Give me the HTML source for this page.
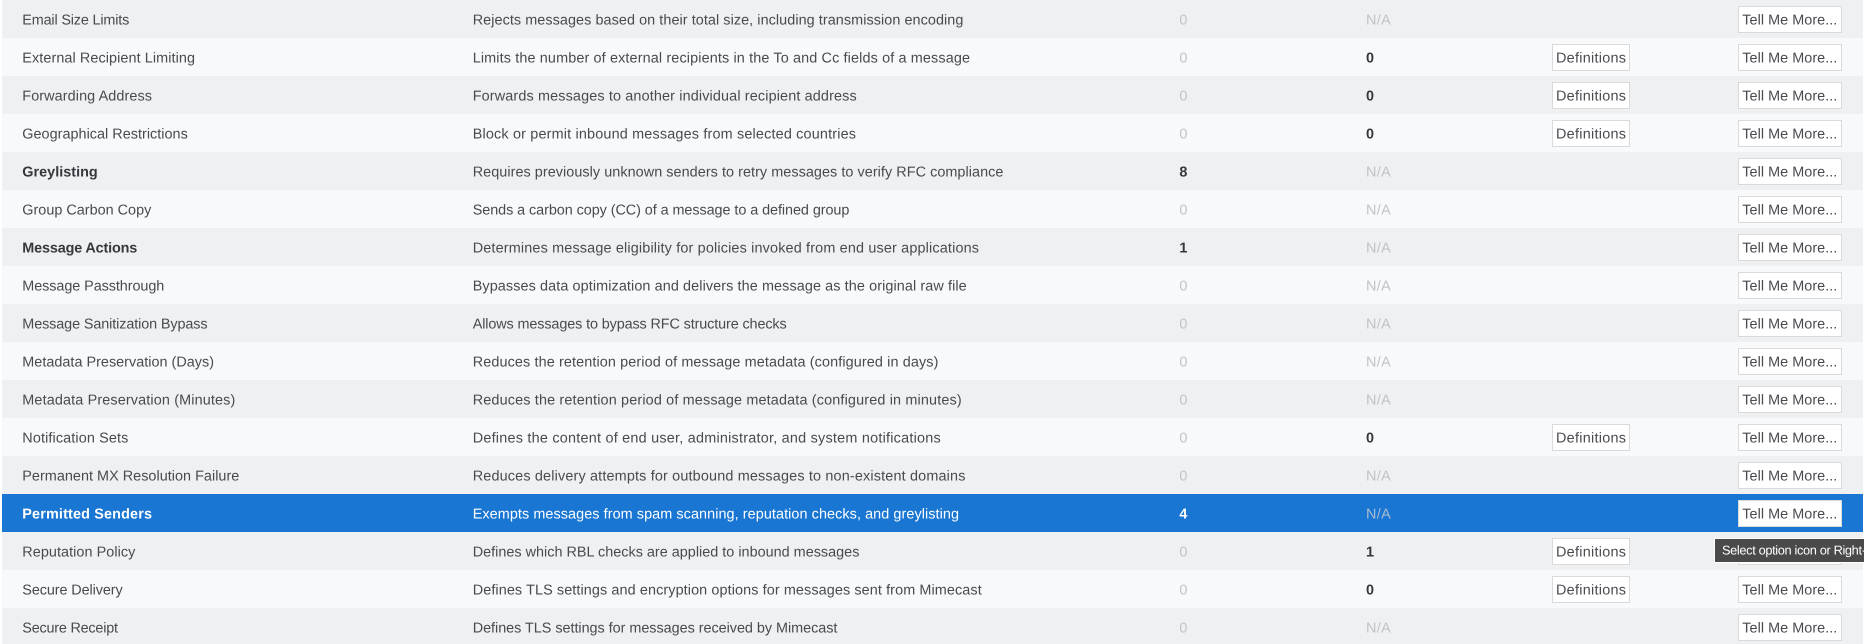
<!DOCTYPE html>
<html lang="en">
<head>
<meta charset="utf-8">
<title>Policies</title>
<style>
html,body{margin:0;padding:0;width:1864px;height:644px;overflow:hidden;background:#fff}
svg{display:block}
text{font-family:"Liberation Sans",Arial,sans-serif;font-size:14.4px;fill:#484a50;text-rendering:geometricPrecision;transform:translateY(-.3px)}
.b{font-weight:700;fill:#35373c}
.m{fill:#c2c3c6}
.g{fill:#eff0f2}
.l{fill:#f8f9fb}
.btn{fill:#fff;stroke:#d9dadc;stroke-width:1}
.w{fill:#fff}
.wb{fill:#fff;font-weight:700}
.n{fill:#a9bbd0}
.t{fill:#fff;font-size:12.8px}
</style>
</head>
<body>
<svg xmlns="http://www.w3.org/2000/svg" width="1864" height="644" viewBox="0 0 1864 644">
<defs>
<g id="tm"><rect class="btn" x="1738.5" y="6.5" width="103" height="26"/><text x="1742.3" y="25" textLength="95" lengthAdjust="spacing">Tell Me More...</text></g>
<g id="df"><rect class="btn" x="1552.5" y="6.5" width="77" height="26"/><text x="1556" y="25" textLength="70" lengthAdjust="spacing">Definitions</text></g>
</defs>

<g transform="translate(0,0)"><rect class="g" x="2" width="1861" height="38"/>
<text x="22.3" y="25" textLength="107" lengthAdjust="spacing">Email Size Limits</text>
<text x="472.7" y="25" textLength="490.7" lengthAdjust="spacing">Rejects messages based on their total size, including transmission encoding</text>
<text class="m" x="1179.4" y="25" textLength="8.5" lengthAdjust="spacing">0</text>
<text class="m" x="1366" y="25" textLength="24.7" lengthAdjust="spacing">N/A</text>
<use href="#tm"/></g>

<g transform="translate(0,38)"><rect class="l" x="2" width="1861" height="38"/>
<text x="22.3" y="25" textLength="172.7" lengthAdjust="spacing">External Recipient Limiting</text>
<text x="472.7" y="25" textLength="497.3" lengthAdjust="spacing">Limits the number of external recipients in the To and Cc fields of a message</text>
<text class="m" x="1179.4" y="25" textLength="8.5" lengthAdjust="spacing">0</text>
<text class="b" x="1366" y="25" textLength="8" lengthAdjust="spacing">0</text>
<use href="#df"/><use href="#tm"/></g>

<g transform="translate(0,76)"><rect class="g" x="2" width="1861" height="38"/>
<text x="22.3" y="25" textLength="129.7" lengthAdjust="spacing">Forwarding Address</text>
<text x="472.7" y="25" textLength="384" lengthAdjust="spacing">Forwards messages to another individual recipient address</text>
<text class="m" x="1179.4" y="25" textLength="8.5" lengthAdjust="spacing">0</text>
<text class="b" x="1366" y="25" textLength="8" lengthAdjust="spacing">0</text>
<use href="#df"/><use href="#tm"/></g>

<g transform="translate(0,114)"><rect class="l" x="2" width="1861" height="38"/>
<text x="22.3" y="25" textLength="165.5" lengthAdjust="spacing">Geographical Restrictions</text>
<text x="472.7" y="25" textLength="383.3" lengthAdjust="spacing">Block or permit inbound messages from selected countries</text>
<text class="m" x="1179.4" y="25" textLength="8.5" lengthAdjust="spacing">0</text>
<text class="b" x="1366" y="25" textLength="8" lengthAdjust="spacing">0</text>
<use href="#df"/><use href="#tm"/></g>

<g transform="translate(0,152)"><rect class="g" x="2" width="1861" height="38"/>
<text class="b" x="22.3" y="25" textLength="75.4" lengthAdjust="spacing">Greylisting</text>
<text x="472.7" y="25" textLength="530.7" lengthAdjust="spacing">Requires previously unknown senders to retry messages to verify RFC compliance</text>
<text class="b" x="1179.4" y="25" textLength="8.5" lengthAdjust="spacing">8</text>
<text class="m" x="1366" y="25" textLength="24.7" lengthAdjust="spacing">N/A</text>
<use href="#tm"/></g>

<g transform="translate(0,190)"><rect class="l" x="2" width="1861" height="38"/>
<text x="22.3" y="25" textLength="129" lengthAdjust="spacing">Group Carbon Copy</text>
<text x="472.7" y="25" textLength="376.7" lengthAdjust="spacing">Sends a carbon copy (CC) of a message to a defined group</text>
<text class="m" x="1179.4" y="25" textLength="8.5" lengthAdjust="spacing">0</text>
<text class="m" x="1366" y="25" textLength="24.7" lengthAdjust="spacing">N/A</text>
<use href="#tm"/></g>

<g transform="translate(0,228)"><rect class="g" x="2" width="1861" height="38"/>
<text class="b" x="22.3" y="25" textLength="115" lengthAdjust="spacing">Message Actions</text>
<text x="472.7" y="25" textLength="506.3" lengthAdjust="spacing">Determines message eligibility for policies invoked from end user applications</text>
<text class="b" x="1179.4" y="25" textLength="8" lengthAdjust="spacing">1</text>
<text class="m" x="1366" y="25" textLength="24.7" lengthAdjust="spacing">N/A</text>
<use href="#tm"/></g>

<g transform="translate(0,266)"><rect class="l" x="2" width="1861" height="38"/>
<text x="22.3" y="25" textLength="142" lengthAdjust="spacing">Message Passthrough</text>
<text x="472.7" y="25" textLength="494" lengthAdjust="spacing">Bypasses data optimization and delivers the message as the original raw file</text>
<text class="m" x="1179.4" y="25" textLength="8.5" lengthAdjust="spacing">0</text>
<text class="m" x="1366" y="25" textLength="24.7" lengthAdjust="spacing">N/A</text>
<use href="#tm"/></g>

<g transform="translate(0,304)"><rect class="g" x="2" width="1861" height="38"/>
<text x="22.3" y="25" textLength="185.3" lengthAdjust="spacing">Message Sanitization Bypass</text>
<text x="472.7" y="25" textLength="314" lengthAdjust="spacing">Allows messages to bypass RFC structure checks</text>
<text class="m" x="1179.4" y="25" textLength="8.5" lengthAdjust="spacing">0</text>
<text class="m" x="1366" y="25" textLength="24.7" lengthAdjust="spacing">N/A</text>
<use href="#tm"/></g>

<g transform="translate(0,342)"><rect class="l" x="2" width="1861" height="38"/>
<text x="22.3" y="25" textLength="191.7" lengthAdjust="spacing">Metadata Preservation (Days)</text>
<text x="472.7" y="25" textLength="465.7" lengthAdjust="spacing">Reduces the retention period of message metadata (configured in days)</text>
<text class="m" x="1179.4" y="25" textLength="8.5" lengthAdjust="spacing">0</text>
<text class="m" x="1366" y="25" textLength="24.7" lengthAdjust="spacing">N/A</text>
<use href="#tm"/></g>

<g transform="translate(0,380)"><rect class="g" x="2" width="1861" height="38"/>
<text x="22.3" y="25" textLength="213" lengthAdjust="spacing">Metadata Preservation (Minutes)</text>
<text x="472.7" y="25" textLength="489" lengthAdjust="spacing">Reduces the retention period of message metadata (configured in minutes)</text>
<text class="m" x="1179.4" y="25" textLength="8.5" lengthAdjust="spacing">0</text>
<text class="m" x="1366" y="25" textLength="24.7" lengthAdjust="spacing">N/A</text>
<use href="#tm"/></g>

<g transform="translate(0,418)"><rect class="l" x="2" width="1861" height="38"/>
<text x="22.3" y="25" textLength="106" lengthAdjust="spacing">Notification Sets</text>
<text x="472.7" y="25" textLength="468" lengthAdjust="spacing">Defines the content of end user, administrator, and system notifications</text>
<text class="m" x="1179.4" y="25" textLength="8.5" lengthAdjust="spacing">0</text>
<text class="b" x="1366" y="25" textLength="8" lengthAdjust="spacing">0</text>
<use href="#df"/><use href="#tm"/></g>

<g transform="translate(0,456)"><rect class="g" x="2" width="1861" height="38"/>
<text x="22.3" y="25" textLength="217" lengthAdjust="spacing">Permanent MX Resolution Failure</text>
<text x="472.7" y="25" textLength="492.7" lengthAdjust="spacing">Reduces delivery attempts for outbound messages to non-existent domains</text>
<text class="m" x="1179.4" y="25" textLength="8.5" lengthAdjust="spacing">0</text>
<text class="m" x="1366" y="25" textLength="24.7" lengthAdjust="spacing">N/A</text>
<use href="#tm"/></g>

<g transform="translate(0,494)"><rect fill="#1976d2" x="2" width="1861" height="38"/>
<text class="wb" x="22.3" y="25" textLength="129.7" lengthAdjust="spacing">Permitted Senders</text>
<text class="w" x="472.7" y="25" textLength="486.3" lengthAdjust="spacing">Exempts messages from spam scanning, reputation checks, and greylisting</text>
<text class="wb" x="1179.4" y="25" textLength="8.5" lengthAdjust="spacing">4</text>
<text class="n" x="1366" y="25" textLength="24.7" lengthAdjust="spacing">N/A</text>
<use href="#tm"/></g>

<g transform="translate(0,532)"><rect class="g" x="2" width="1861" height="38"/>
<text x="22.3" y="25" textLength="113" lengthAdjust="spacing">Reputation Policy</text>
<text x="472.7" y="25" textLength="386.7" lengthAdjust="spacing">Defines which RBL checks are applied to inbound messages</text>
<text class="m" x="1179.4" y="25" textLength="8.5" lengthAdjust="spacing">0</text>
<text class="b" x="1366" y="25" textLength="6" lengthAdjust="spacing">1</text>
<use href="#df"/><use href="#tm"/></g>

<g transform="translate(0,570)"><rect class="l" x="2" width="1861" height="38"/>
<text x="22.3" y="25" textLength="100.4" lengthAdjust="spacing">Secure Delivery</text>
<text x="472.7" y="25" textLength="509" lengthAdjust="spacing">Defines TLS settings and encryption options for messages sent from Mimecast</text>
<text class="m" x="1179.4" y="25" textLength="8.5" lengthAdjust="spacing">0</text>
<text class="b" x="1366" y="25" textLength="8" lengthAdjust="spacing">0</text>
<use href="#df"/><use href="#tm"/></g>

<g transform="translate(0,608)"><rect class="g" x="2" width="1861" height="36"/>
<text x="22.3" y="25" textLength="95.7" lengthAdjust="spacing">Secure Receipt</text>
<text x="472.7" y="25" textLength="364.7" lengthAdjust="spacing">Defines TLS settings for messages received by Mimecast</text>
<text class="m" x="1179.4" y="25" textLength="8.5" lengthAdjust="spacing">0</text>
<text class="m" x="1366" y="25" textLength="24.7" lengthAdjust="spacing">N/A</text>
<use href="#tm"/></g>

<rect x="1714.5" y="538.5" width="160" height="24" fill="#4a4a4a" stroke="#fff" stroke-width="1"/>
<text class="t" x="1722" y="555" textLength="140" lengthAdjust="spacing">Select option icon or Right</text>
<text class="t" x="1862" y="555">-click</text>
</svg>
</body>
</html>
